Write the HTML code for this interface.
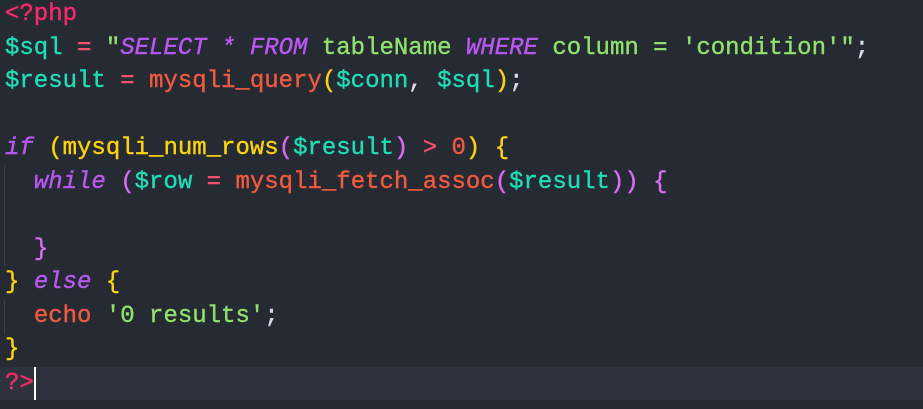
<!DOCTYPE html>
<html><head><meta charset="utf-8"><style>
html,body{margin:0;padding:0;background:#262a33;width:923px;height:409px;overflow:hidden}
.code{position:absolute;left:0;top:-2px;width:923px;font-family:"Liberation Mono",monospace;font-size:24px;line-height:33.5px;color:#e6e6e6;-webkit-text-stroke:0.4px currentColor}
.l{padding-left:5px;height:33.5px;position:relative;white-space:pre}
.cur{background:#2f333d}
.t{color:#f72a6c}.v{color:#1fdcb4}.o{color:#f2506b}.f{color:#ef5a3e}.s{color:#8fe06a}
.k{color:#b957f2;font-style:italic}.y{color:#fcd20f}.p{color:#d86cf0}.w{color:#d8d8e8}
.g{position:absolute;left:4px;width:1px;background:#3a3f4a}
.caret{display:inline-block;width:2px;height:33px;background:#fff;vertical-align:top;-webkit-text-stroke:0}
</style></head><body>
<div class="g" style="top:165px;height:101px"></div>
<div class="g" style="top:300px;height:34px"></div>
<div class="code"><div class="l"><span class="t">&lt;?php</span></div><div class="l"><span class="v">$sql</span> <span class="o">=</span> <span class="s">"</span><span class="k">SELECT * FROM</span> <span class="s">tableName</span> <span class="k">WHERE</span> <span class="s">column = 'condition'"</span><span class="w">;</span></div><div class="l"><span class="v">$result</span> <span class="o">=</span> <span class="f">mysqli_query</span><span class="y">(</span><span class="v">$conn</span><span class="w">,</span> <span class="v">$sql</span><span class="y">)</span><span class="w">;</span></div><div class="l"> </div><div class="l"><span class="k">if</span> <span class="y">(mysqli_num_rows</span><span class="p">(</span><span class="v">$result</span><span class="p">)</span> <span class="o">&gt;</span> <span class="f">0</span><span class="y">)</span> <span class="y">{</span></div><div class="l">  <span class="k">while</span> <span class="p">(</span><span class="v">$row</span> <span class="o">=</span> <span class="f">mysqli_fetch_assoc</span><span class="p">(</span><span class="v">$result</span><span class="p">))</span> <span class="p">{</span></div><div class="l"> </div><div class="l">  <span class="p">}</span></div><div class="l"><span class="y">}</span> <span class="k">else</span> <span class="y">{</span></div><div class="l">  <span class="f">echo</span> <span class="s">'0 results'</span><span class="w">;</span></div><div class="l"><span class="y">}</span></div><div class="l cur"><span class="t">?&gt;</span><span class="caret"></span></div></div>
</body></html>
